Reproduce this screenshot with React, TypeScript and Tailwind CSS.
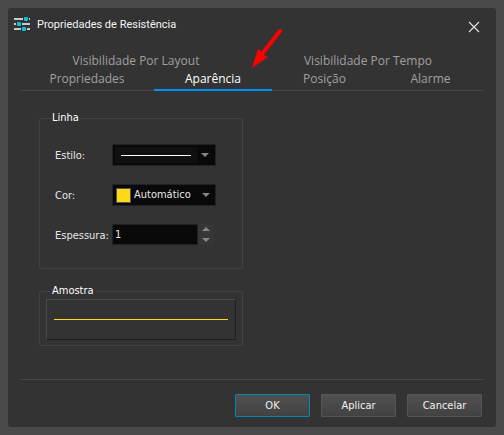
import React, { useState } from 'react';
import clsx from 'clsx';

interface TabItem {
  label: string;
  className: string;
}

const layoutTabs: TabItem[] = [
  { label: "Visibilidade Por Layout", className: "flex-1" },
  { label: "Visibilidade Por Tempo", className: "flex-1" },
];

const mainTabs: TabItem[] = [
  { label: "Propriedades", className: "grow-[134]" },
  { label: "Aparência", className: "grow-[118]" },
  { label: "Posição", className: "grow-[105]" },
  { label: "Alarme", className: "grow-[107]" },
];

const selectClass =
  "h-[22px] w-full appearance-none rounded-[1px] border border-[#222222] bg-[#090909] text-[#e6e6e6] outline-none";

const SlidersIcon = () => (
  <svg width="17" height="15" viewBox="0 0 17 15" aria-hidden="true">
    <g fill="#c9c9c9">
      <rect x="0" y="1" width="16" height="2" />
      <rect x="0" y="6" width="16" height="2" />
      <rect x="0" y="11" width="16" height="2" />
    </g>
    <g fill="#333333">
      <rect x="9" y="0" width="6" height="4" />
      <rect x="2" y="5" width="6" height="4" />
      <rect x="7" y="10" width="6" height="4" />
    </g>
    <g fill="#00c8dc">
      <rect x="10" y="0" width="4" height="4" rx="1" />
      <rect x="3" y="5" width="4" height="4" rx="1" />
      <rect x="8" y="10" width="4" height="4" rx="1" />
    </g>
  </svg>
);

const Caret = ({ up = false }: { up?: boolean }) => (
  <svg width="8" height="4" viewBox="0 0 8 4" aria-hidden="true">
    <path d={up ? "M0 4h8L4 0z" : "M0 0h8L4 4z"} fill="#868686" />
  </svg>
);

interface TabProps {
  item: TabItem;
  active: boolean;
  onSelect: (label: string) => void;
}

const Tab: React.FC<TabProps> = ({ item, active, onSelect }) => (
  <button
    type="button"
    role="tab"
    aria-selected={active}
    onClick={() => onSelect(item.label)}
    className={clsx("basis-0", item.className, active ? "text-white" : "text-[#a0a0a0]")}
  >
    {item.label}
  </button>
);

interface DialogButtonProps {
  children: React.ReactNode;
  primary?: boolean;
}

const DialogButton: React.FC<DialogButtonProps> = ({ children, primary = false }) => (
  <button
    type="button"
    className={clsx(
      "h-[23px] w-[75px] rounded-[1px] border bg-linear-to-b from-[#505050] to-[#424242] text-[#f0f0f0]",
      primary ? "border-[#0087b8]" : "border-[#555555]"
    )}
  >
    {children}
  </button>
);

const App: React.FC = () => {
  const [tab, setTab] = useState("Aparência");
  const [thickness, setThickness] = useState(1);

  return (
    <div className="flex min-h-screen flex-col bg-[#4a4a4a] p-2 font-['DejaVu_Sans_Condensed','DejaVu_Sans',sans-serif] text-[11px] leading-4 text-[#e6e6e6]">
      <main className="relative flex flex-1 flex-col rounded-[3px] bg-[#333333] px-3 pb-2.5">
        <header className="flex h-[37px] items-center gap-1.5 pr-1">
          <div className="-ml-1.5 flex items-center gap-1.5 pb-1">
            <SlidersIcon />
            <h1 className="font-[Roboto,'Liberation_Sans',sans-serif] text-[11px] text-[#f4f4f4]">
              Propriedades de Resistência
            </h1>
          </div>
          <button type="button" aria-label="Fechar" className="ml-auto">
            <svg width="12" height="12" viewBox="0 0 12 12" fill="none" stroke="#e6e6e6" strokeWidth="1.1">
              <path d="M1 1l10 10M11 1L1 11" />
            </svg>
          </button>
        </header>

        <nav role="tablist" className="font-['Open_Sans','Noto_Sans',sans-serif] text-[12px]">
          <div className="flex h-6 items-end">
            {layoutTabs.map((item) => (
              <Tab key={item.label} item={item} active={tab === item.label} onSelect={setTab} />
            ))}
          </div>
          <div className="flex h-[22px] border-b border-[#464646]">
            {mainTabs.map((item) => (
              <div
                key={item.label}
                className={clsx(
                  "-mb-px flex h-[22px] basis-0 border-b-2",
                  item.className,
                  tab === item.label ? "border-[#0090f5]" : "border-transparent"
                )}
              >
                <Tab item={{ ...item, className: "grow" }} active={tab === item.label} onSelect={setTab} />
              </div>
            ))}
          </div>
        </nav>

        <svg className="absolute top-5 left-60" width="36" height="44" viewBox="0 0 36 44" aria-hidden="true">
          <path d="M32 3L14 26" stroke="#ff0000" strokeWidth="4" strokeLinecap="round" />
          <path d="M4 40L10 21L14 24L16 27L20 29z" fill="#ff0000" />
        </svg>

        <section className="flex w-[223px] flex-col gap-3.5 pt-[19px] pl-[19px]">
          <fieldset className="min-w-0 rounded-[2px] border border-[#424242] pr-4 pb-[23px] pl-[15px]">
            <legend className="-ml-[5px] px-0.5 text-white">Linha</legend>
            <div className="grid grid-cols-[57px_minmax(0,1fr)] items-center gap-y-[18px] pt-[18px] pr-2.5">
              <label htmlFor="estilo" className="pt-0.5">
                Estilo:
              </label>
              <div className="relative">
                <select id="estilo" className={selectClass}>
                  <option value="solid" aria-label="Contínua"></option>
                </select>
                <div className="pointer-events-none absolute inset-0 flex items-center p-[3px]">
                  <div className="flex h-4 flex-1 items-center bg-[#101010] px-1.5">
                    <span className="h-px w-full bg-white" />
                  </div>
                  <span className="flex w-4 justify-center">
                    <Caret />
                  </span>
                </div>
              </div>

              <label htmlFor="cor" className="pt-0.5">
                Cor:
              </label>
              <div className="relative">
                <select id="cor" className={clsx(selectClass, "pl-[21px]")}>
                  <option>Automático</option>
                </select>
                <div className="pointer-events-none absolute inset-0 flex items-center justify-between pr-1.5 pl-1">
                  <span className="size-[15px] border border-[#555555] bg-[#ffd817]" />
                  <Caret />
                </div>
              </div>

              <label htmlFor="espessura" className="pt-0.5 whitespace-nowrap">
                Espessura:
              </label>
              <div className="flex h-[21px] pr-0.5">
                <input
                  id="espessura"
                  type="text"
                  value={thickness}
                  onChange={(event) => setThickness(Number(event.target.value) || 0)}
                  className="h-full min-w-0 flex-1 border border-[#222222] bg-[#090909] px-0.5 text-[#e6e6e6] outline-none"
                />
                <div className="flex w-4 flex-col bg-[#363636]">
                  <button
                    type="button"
                    aria-label="Aumentar"
                    onClick={() => setThickness(thickness + 1)}
                    className="flex flex-1 items-center justify-center"
                  >
                    <Caret up />
                  </button>
                  <button
                    type="button"
                    aria-label="Diminuir"
                    onClick={() => setThickness(Math.max(0, thickness - 1))}
                    className="flex flex-1 items-center justify-center"
                  >
                    <Caret />
                  </button>
                </div>
              </div>
            </div>
          </fieldset>

          <fieldset className="min-w-0 rounded-[2px] border border-[#424242] px-1.5 pb-[5px]">
            <legend className="ml-1 px-0.5 text-white">Amostra</legend>
            <div className="flex h-[41px] items-center border border-t-[#4a4a4a] border-r-[#202020] border-b-[#202020] border-l-[#4a4a4a] px-[7px]">
              <span className="h-px w-full bg-[#ffd817]" />
            </div>
          </fieldset>
        </section>

        <footer className="mt-auto flex justify-end gap-[11px] border-t border-[#464646] pt-3.5 pr-0.5">
          <DialogButton primary>OK</DialogButton>
          <DialogButton>Aplicar</DialogButton>
          <DialogButton>Cancelar</DialogButton>
        </footer>
      </main>
    </div>
  );
};

export default App;
